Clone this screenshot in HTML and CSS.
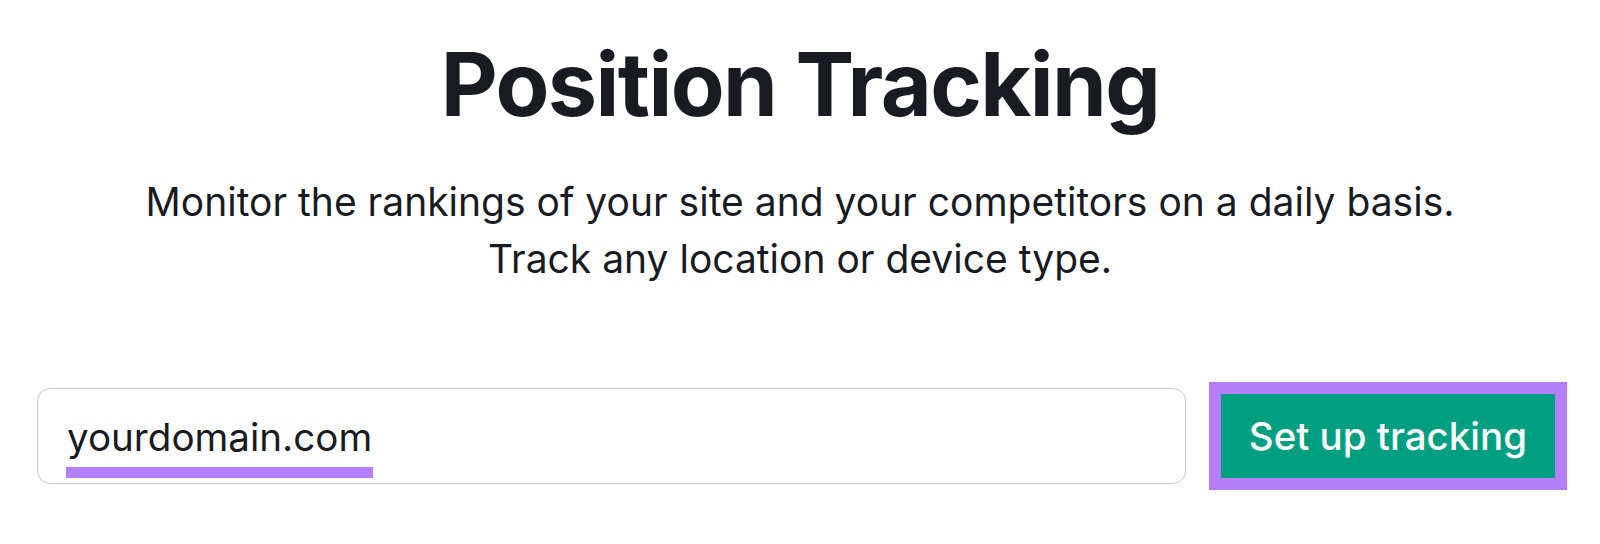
FILE: index.html
```html
<!DOCTYPE html>
<html>
<head>
  <meta name="viewport" content="width=device-width, initial-scale=1">
  <title>Position Tracking</title>
  <link rel="stylesheet" href="styles.css">
</head>
<body>
  <div class="hero">
    <h1 class="hero-title">Position Tracking</h1>
    <p class="hero-text">Monitor the rankings of your site and your competitors on a daily basis.<br>Track any location or device type.</p>
    <div class="setup-row">
      <div class="domain-field"><span class="domain-value">yourdomain.com</span></div>
      <button class="setup-btn" type="button">Set up tracking</button>
    </div>
  </div>
</body>
</html>
```

FILE: styles.css
```css
body {margin: 0; background: #fff; color: #191b23; font-family: Inter, "Liberation Sans", sans-serif;}
.hero {text-align: center; padding-top: 34px;}
.hero-title {margin: 0; font-size: 88px; line-height: 100px; font-weight: 700; letter-spacing: -1.6px;}
.hero-text {margin: 39px 0 0; font-size: 39px; line-height: 57px; font-weight: 400;}

.setup-row {display: flex; align-items: center; gap: 23px; margin-top: 95px; padding: 0 33px 0 37px; text-align: left;}
.domain-field {flex: 1; height: 96px; box-sizing: border-box; border: 1.5px solid #c5c7cd; border-radius: 13px; padding: 29px 28px 0; display: flex; align-items: flex-start;}
.domain-value {display: inline-block; font-size: 38.6px; line-height: 38px; padding: 0 1px 11px; border-bottom: 11px solid #b57ffa;}

.setup-btn {height: 108px; border: 12px solid #b57ffa; background: #009f81; color: #fff; font-family: inherit; font-size: 38.5px; font-weight: 500; padding: 0 28px; cursor: pointer;}
```
